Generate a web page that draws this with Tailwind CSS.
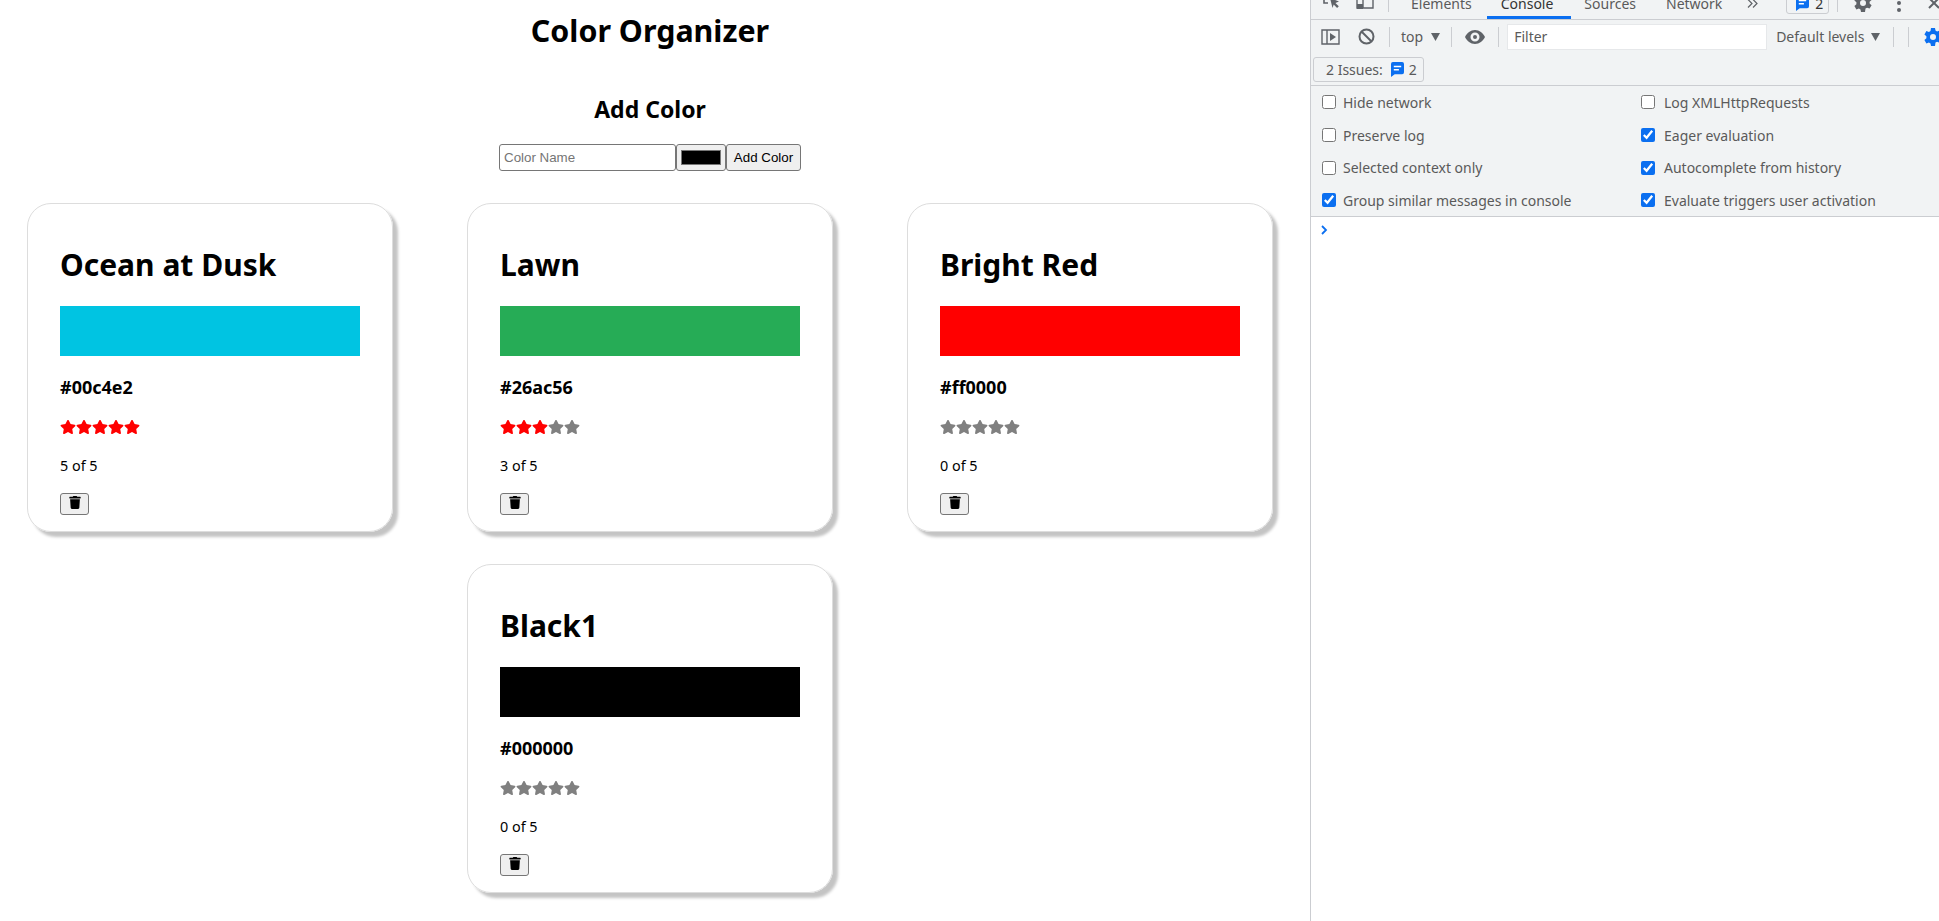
<!DOCTYPE html>
<html lang="en">
<head>
    <meta charset="UTF-8">
    <meta name="viewport" content="width=device-width, initial-scale=1.0">
    <title>Color Organizer</title>
    <script src="https://cdn.jsdelivr.net/npm/@tailwindcss/browser@4"></script>
</head>
<body class="bg-white text-black h-screen overflow-hidden flex font-['Noto_Sans',sans-serif]">
    <svg class="hidden">
        <defs>
            <symbol id="star" viewBox="0 0 576 512"><path fill="currentColor" d="M259.3 17.8L194 150.2 47.9 171.5c-26.2 3.8-36.7 36.1-17.7 54.6l105.7 103-25 145.5c-4.5 26.3 23.2 46 46.4 33.7L288 439.6l130.7 68.7c23.2 12.2 50.9-7.4 46.4-33.7l-25-145.5 105.7-103c19-18.5 8.5-50.8-17.7-54.6L382 150.2 316.7 17.8c-11.7-23.6-45.6-23.9-57.4 0z"/></symbol>
            <symbol id="trash" viewBox="0 0 448 512"><path fill="currentColor" d="M432 32H312l-9.4-18.7A24 24 0 0 0 281.1 0H166.8a23.72 23.72 0 0 0-21.4 13.3L136 32H16A16 16 0 0 0 0 48v32a16 16 0 0 0 16 16h416a16 16 0 0 0 16-16V48a16 16 0 0 0-16-16zM53.2 467a48 48 0 0 0 47.9 45h245.8a48 48 0 0 0 47.9-45L416 128H32z"/></symbol>
            <symbol id="msg" viewBox="0 0 14 16"><path fill="#0b6ff0" d="M2 0h10a2 2 0 0 1 2 2v9a2 2 0 0 1-2 2H4l-4 3V2a2 2 0 0 1 2-2z"/><path fill="#fff" d="M3 4h8v1.6H3zM3 7.4h5.5V9H3z"/></symbol>
        </defs>
    </svg>

    <!-- page -->
    <main class="w-[1310px] shrink-0 pr-[10px]">
        <h1 class="text-[30.4px] leading-[40px] font-bold text-center pt-[11px]">Color Organizer</h1>
        <h2 class="text-[23px] leading-[30px] font-bold text-center mt-[43px]">Add Color</h2>
        <form class="flex justify-center mt-[20px] h-[27px] font-['Liberation_Sans',sans-serif] text-[13.33px]">
            <input type="text" placeholder="Color Name" class="w-[177px] border border-[#767676] rounded-[3px] px-[4px] placeholder:text-[#757575]">
            <input type="color" value="#000000" class="w-[50px] h-[27px] border border-[#767676] rounded-[3px] bg-[#efefef] px-[2px] py-[1px]">
            <button type="button" class="w-[75px] border border-[#767676] rounded-[3px] bg-[#efefef]">Add Color</button>
        </form>

        <div class="flex flex-wrap justify-center gap-x-[74px] gap-y-[32px] mt-[32px]">
            <div class="w-[366px] h-[329px] border border-[#dddddd] rounded-[24px] shadow-[5px_5px_3px_#c4c4c4] px-[32px]">
                <h2 class="text-[30px] leading-[38px] font-bold mt-[42px]">Ocean at Dusk</h2>
                <div class="h-[50px] bg-[#00c4e2] mt-[22px]"></div>
                <p class="text-[18px] leading-[22px] font-bold mt-[20px]">#00c4e2</p>
                <div class="flex mt-[21px] text-[#ff0000]">
                    <svg class="w-4 h-4"><use href="#star"/></svg><svg class="w-4 h-4"><use href="#star"/></svg><svg class="w-4 h-4"><use href="#star"/></svg><svg class="w-4 h-4"><use href="#star"/></svg><svg class="w-4 h-4"><use href="#star"/></svg>
                </div>
                <p class="text-[14.4px] leading-[20px] mt-[21px]">5 of 5</p>
                <button class="flex items-center justify-center w-[29px] h-[22px] mt-[17px] bg-[#efefef] border border-[#767676] rounded-[3px]"><svg class="w-[12px] h-[13px] mb-[3px]"><use href="#trash"/></svg></button>
            </div>
            <div class="w-[366px] h-[329px] border border-[#dddddd] rounded-[24px] shadow-[5px_5px_3px_#c4c4c4] px-[32px]">
                <h2 class="text-[30px] leading-[38px] font-bold mt-[42px]">Lawn</h2>
                <div class="h-[50px] bg-[#26ac56] mt-[22px]"></div>
                <p class="text-[18px] leading-[22px] font-bold mt-[20px]">#26ac56</p>
                <div class="flex mt-[21px] text-[#808080]">
                    <svg class="w-4 h-4 text-[#ff0000]"><use href="#star"/></svg><svg class="w-4 h-4 text-[#ff0000]"><use href="#star"/></svg><svg class="w-4 h-4 text-[#ff0000]"><use href="#star"/></svg><svg class="w-4 h-4"><use href="#star"/></svg><svg class="w-4 h-4"><use href="#star"/></svg>
                </div>
                <p class="text-[14.4px] leading-[20px] mt-[21px]">3 of 5</p>
                <button class="flex items-center justify-center w-[29px] h-[22px] mt-[17px] bg-[#efefef] border border-[#767676] rounded-[3px]"><svg class="w-[12px] h-[13px] mb-[3px]"><use href="#trash"/></svg></button>
            </div>
            <div class="w-[366px] h-[329px] border border-[#dddddd] rounded-[24px] shadow-[5px_5px_3px_#c4c4c4] px-[32px]">
                <h2 class="text-[30px] leading-[38px] font-bold mt-[42px]">Bright Red</h2>
                <div class="h-[50px] bg-[#ff0000] mt-[22px]"></div>
                <p class="text-[18px] leading-[22px] font-bold mt-[20px]">#ff0000</p>
                <div class="flex mt-[21px] text-[#808080]">
                    <svg class="w-4 h-4"><use href="#star"/></svg><svg class="w-4 h-4"><use href="#star"/></svg><svg class="w-4 h-4"><use href="#star"/></svg><svg class="w-4 h-4"><use href="#star"/></svg><svg class="w-4 h-4"><use href="#star"/></svg>
                </div>
                <p class="text-[14.4px] leading-[20px] mt-[21px]">0 of 5</p>
                <button class="flex items-center justify-center w-[29px] h-[22px] mt-[17px] bg-[#efefef] border border-[#767676] rounded-[3px]"><svg class="w-[12px] h-[13px] mb-[3px]"><use href="#trash"/></svg></button>
            </div>
            <div class="w-[366px] h-[329px] border border-[#dddddd] rounded-[24px] shadow-[5px_5px_3px_#c4c4c4] px-[32px]">
                <h2 class="text-[30px] leading-[38px] font-bold mt-[42px]">Black1</h2>
                <div class="h-[50px] bg-black mt-[22px]"></div>
                <p class="text-[18px] leading-[22px] font-bold mt-[20px]">#000000</p>
                <div class="flex mt-[21px] text-[#808080]">
                    <svg class="w-4 h-4"><use href="#star"/></svg><svg class="w-4 h-4"><use href="#star"/></svg><svg class="w-4 h-4"><use href="#star"/></svg><svg class="w-4 h-4"><use href="#star"/></svg><svg class="w-4 h-4"><use href="#star"/></svg>
                </div>
                <p class="text-[14.4px] leading-[20px] mt-[21px]">0 of 5</p>
                <button class="flex items-center justify-center w-[29px] h-[22px] mt-[17px] bg-[#efefef] border border-[#767676] rounded-[3px]"><svg class="w-[12px] h-[13px] mb-[3px]"><use href="#trash"/></svg></button>
            </div>
        </div>
    </main>

    <!-- devtools -->
    <aside class="flex-1 min-w-0 border-l border-[#cbcdd1] text-[14px] text-[#5a5a5a] overflow-hidden">
        <!-- tab strip, scrolled off the top of the window -->
        <div class="relative h-[20px] bg-[#f1f3f4] border-b border-[#cbcdd1] overflow-hidden">
            <div class="flex items-center h-[14px] -mt-[4px] whitespace-nowrap">
                <svg class="ml-[12px] w-[18px] h-[18px] text-[#5f6368] shrink-0" viewBox="0 0 18 18"><path fill="none" stroke="currentColor" stroke-width="1.6" d="M1 1v8h4"/><path fill="currentColor" d="M7 4l9 3.5-3.6 1.4 3.4 3.4-1.7 1.7-3.4-3.4L9.5 14z"/></svg>
                <svg class="ml-[15px] w-[18px] h-[18px] text-[#5f6368] shrink-0" viewBox="0 0 18 18"><path fill="none" stroke="currentColor" stroke-width="1.4" d="M1 1h16v13H1zM7 1v13"/><path fill="currentColor" d="M1 10h6v5H1z"/></svg>
                <span class="ml-[14px] w-px h-[18px] bg-[#cbcdd1] shrink-0"></span>
                <span class="ml-[22px]">Elements</span>
                <span class="ml-[29px] text-[#333]">Console</span>
                <span class="ml-[31px]">Sources</span>
                <span class="ml-[30px]">Network</span>
                <svg class="ml-[25px] w-[11px] h-[9px] mt-[1px] text-[#5f6368] shrink-0" viewBox="0 0 11 9"><path fill="none" stroke="currentColor" stroke-width="1.200" d="M1 .5l4 4-4 4M6 .5l4 4-4 4"/></svg>
                <span class="ml-[28px] flex items-center gap-[6px] h-[22px] w-[43px] pl-[9px] border border-[#cbcdd1] rounded-[3px] text-[#333] shrink-0"><svg class="w-[13px] h-[15px]"><use href="#msg"/></svg>2</span>
                <span class="ml-[8px] w-px h-[18px] bg-[#cbcdd1] shrink-0"></span>
                <svg class="ml-[16px] w-[18px] h-[18px] text-[#5f6368] shrink-0" viewBox="0 0 18 18"><path fill="currentColor" fill-rule="evenodd" d="M7 0h4l.5 2.600 1.600.9 2.500-.9 2 3.400-2 1.700v1.800l2 1.700-2 3.400-2.500-.9-1.600.9L11 18H7l-.5-2.600-1.600-.9-2.500.9-2-3.400 2-1.700V8.200L.4 6.500l2-3.400 2.500.9 1.600-.9zM9 6a3 3 0 1 0 0 6 3 3 0 0 0 0-6z"/></svg>
                <span class="ml-[25px] flex flex-col gap-[3px] shrink-0"><i class="w-[4px] h-[4px] rounded-full bg-[#5f6368]"></i><i class="w-[4px] h-[4px] rounded-full bg-[#5f6368]"></i><i class="w-[4px] h-[4px] rounded-full bg-[#5f6368]"></i></span>
                <svg class="ml-[27px] w-[12px] h-[12px] text-[#5f6368] shrink-0" viewBox="0 0 12 12"><path stroke="currentColor" stroke-width="2" d="M1 1l10 10M11 1L1 11"/></svg>
            </div>
            <span class="absolute left-[176px] bottom-0 w-[84px] h-[3px] bg-[#0b6ff0]"></span>
        </div>

        <!-- console toolbar -->
        <div class="flex items-center h-[31px] pt-[2px] bg-[#f1f3f4] whitespace-nowrap">
            <svg class="ml-[10px] w-[19px] h-[18px] text-[#5f6368] shrink-0" viewBox="0 0 19 18"><path fill="none" stroke="currentColor" stroke-width="1.4" d="M1 2h17v14H1zM6 2v14"/><path fill="currentColor" d="M9 5l6 4-6 4z"/></svg>
            <svg class="ml-[18px] w-[17px] h-[17px] text-[#5f6368] shrink-0" viewBox="0 0 17 17"><circle cx="8.500" cy="8.500" r="7" fill="none" stroke="currentColor" stroke-width="2"/><path stroke="currentColor" stroke-width="2" d="M3.500 3.500l10 10"/></svg>
            <span class="ml-[14px] w-px h-[20px] bg-[#cbcdd1] shrink-0"></span>
            <span class="ml-[11px]">top</span>
            <svg class="ml-[8px] w-[9px] h-[8px] text-[#5f6368] shrink-0" viewBox="0 0 9 8"><path fill="currentColor" d="M0 0h9L4.500 8z"/></svg>
            <span class="ml-[11px] w-px h-[20px] bg-[#cbcdd1] shrink-0"></span>
            <svg class="ml-[13px] w-[20px] h-[14px] text-[#5f6368] shrink-0" viewBox="0 0 20 14"><path fill="currentColor" fill-rule="evenodd" d="M10 0c4.500 0 8 3 10 7-2 4-5.500 7-10 7S2 11 0 7c2-4 5.500-7 10-7zm0 2.500a4.500 4.500 0 1 0 0 9 4.500 4.500 0 0 0 0-9zM10 5a2 2 0 1 1 0 4 2 2 0 0 1 0-4z"/></svg>
            <span class="ml-[13px] w-px h-[20px] bg-[#cbcdd1] shrink-0"></span>
            <div class="ml-[8px] w-[260px] h-[26px] bg-white border border-[#e6e8ea] pl-[6px] leading-[24px] shrink-0">Filter</div>
            <span class="ml-[9px]">Default levels</span>
            <svg class="ml-[7px] w-[9px] h-[8px] text-[#5f6368] shrink-0" viewBox="0 0 9 8"><path fill="currentColor" d="M0 0h9L4.500 8z"/></svg>
            <span class="ml-[13px] w-px h-[20px] bg-[#cbcdd1] shrink-0"></span>
            <span class="ml-[14px] w-px h-[20px] bg-[#cbcdd1] shrink-0"></span>
            <svg class="ml-[15px] w-[18px] h-[18px] text-[#0b6ff0] shrink-0" viewBox="0 0 18 18"><path fill="currentColor" fill-rule="evenodd" d="M7 0h4l.5 2.600 1.600.9 2.500-.9 2 3.400-2 1.700v1.800l2 1.700-2 3.400-2.500-.9-1.600.9L11 18H7l-.5-2.600-1.600-.9-2.500.9-2-3.400 2-1.700V8.200L.4 6.500l2-3.400 2.500.9 1.600-.9zM9 6a3 3 0 1 0 0 6 3 3 0 0 0 0-6z"/></svg>
        </div>

        <!-- issues bar -->
        <div class="h-[35px] bg-[#f1f3f4] border-b border-[#cbcdd1] pt-[6px] pl-[2px]">
            <div class="flex items-center w-[111px] h-[25px] pl-[12px] border border-[#cbcdd1] rounded-[3px] whitespace-nowrap">
                2 Issues:
                <svg class="ml-[8px] w-[13px] h-[15px] shrink-0"><use href="#msg"/></svg>
                <span class="ml-[5px]">2</span>
            </div>
        </div>

        <!-- settings -->
        <div class="grid grid-cols-[319px_1fr] grid-rows-[repeat(4,32.7px)] h-[131px] pl-[11px] bg-[#f1f3f4] border-b border-[#cbcdd1] items-center">
            <label class="flex items-center gap-[7px]"><input type="checkbox" class="w-[14px] h-[14px] m-0 accent-[#0b6ff0]">Hide network</label>
            <label class="flex items-center gap-[9px]"><input type="checkbox" class="w-[14px] h-[14px] m-0 accent-[#0b6ff0]">Log XMLHttpRequests</label>
            <label class="flex items-center gap-[7px]"><input type="checkbox" class="w-[14px] h-[14px] m-0 accent-[#0b6ff0]">Preserve log</label>
            <label class="flex items-center gap-[9px]"><input type="checkbox" checked class="w-[14px] h-[14px] m-0 accent-[#0b6ff0]">Eager evaluation</label>
            <label class="flex items-center gap-[7px]"><input type="checkbox" class="w-[14px] h-[14px] m-0 accent-[#0b6ff0]">Selected context only</label>
            <label class="flex items-center gap-[9px]"><input type="checkbox" checked class="w-[14px] h-[14px] m-0 accent-[#0b6ff0]">Autocomplete from history</label>
            <label class="flex items-center gap-[7px]"><input type="checkbox" checked class="w-[14px] h-[14px] m-0 accent-[#0b6ff0]">Group similar messages in console</label>
            <label class="flex items-center gap-[9px]"><input type="checkbox" checked class="w-[14px] h-[14px] m-0 accent-[#0b6ff0]">Evaluate triggers user activation</label>
        </div>

        <!-- prompt -->
        <div class="pl-[9px] pt-[8px]">
            <svg class="w-[8px] h-[10px] text-[#0b6ff0]" viewBox="0 0 8 10"><path fill="none" stroke="currentColor" stroke-width="1.800" d="M2 1l4 4-4 4"/></svg>
        </div>
    </aside>
</body>
</html>
